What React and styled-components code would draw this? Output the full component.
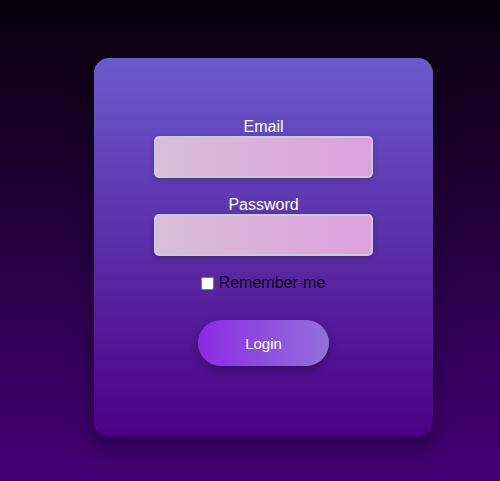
import React from "react";
import styled, { createGlobalStyle } from "styled-components";

const Global = createGlobalStyle`
  html, body { margin: 0; padding: 0; }
  body {
    min-height: 100vh;
    background: linear-gradient(to bottom, #060009 0%, #440076 100%);
    font-family: "Liberation Sans", Arial, sans-serif;
  }
`;

const Page = styled.div`
  min-height: 100vh;
  box-sizing: border-box;
  padding: 58px 0 0 94px;
`;

const Card = styled.form`
  box-sizing: border-box;
  width: 339px;
  height: 379px;
  padding-top: 60px;
  border-radius: 15px;
  background: linear-gradient(to bottom, #6a5acd 0%, #4b0082 100%);
  box-shadow: 0 10px 25px rgba(0, 0, 0, 0.35);
  display: flex;
  flex-direction: column;
  align-items: center;
`;

const Field = styled.div`
  display: flex;
  flex-direction: column;
  align-items: center;
  margin-top: ${(p) => (p.$first ? "0" : "18px")};
`;

const Label = styled.label`
  color: #ffffff;
  font-size: 16px;
  line-height: 18px;
`;

const Input = styled.input`
  box-sizing: border-box;
  width: 219px;
  height: 42px;
  border: 2px solid #cccccc;
  border-radius: 5px;
  background: linear-gradient(to right, #d8bfd8, #dda0dd);
  box-shadow: 0 2px 6px rgba(0, 0, 0, 0.2);
  outline: none;
  padding: 0 10px;
  font-size: 16px;
`;

const Remember = styled.label`
  display: flex;
  align-items: center;
  margin-top: 18px;
  padding-right: 5px;
  color: #14001c;
  font-size: 16px;
  line-height: 18px;
`;

const Check = styled.input`
  margin: 0 5px 0 4px;
  width: 13px;
  height: 13px;
`;

const Button = styled.button`
  margin-top: 28px;
  width: 131px;
  height: 46px;
  border: none;
  border-radius: 23px;
  background: linear-gradient(to right, #8a2be2, #9370db);
  color: #ffffff;
  font-family: "Liberation Sans", Arial, sans-serif;
  font-size: 15px;
  box-shadow: 0 4px 10px rgba(0, 0, 0, 0.3);
  cursor: pointer;
`;

export default function App() {
  return (
    <>
      <Global />
      <Page>
        <Card onSubmit={(e) => e.preventDefault()}>
          <Field $first>
            <Label htmlFor="email">Email</Label>
            <Input id="email" type="email" />
          </Field>
          <Field>
            <Label htmlFor="password">Password</Label>
            <Input id="password" type="password" />
          </Field>
          <Remember>
            <Check type="checkbox" />
            Remember-me
          </Remember>
          <Button type="submit">Login</Button>
        </Card>
      </Page>
    </>
  );
}
